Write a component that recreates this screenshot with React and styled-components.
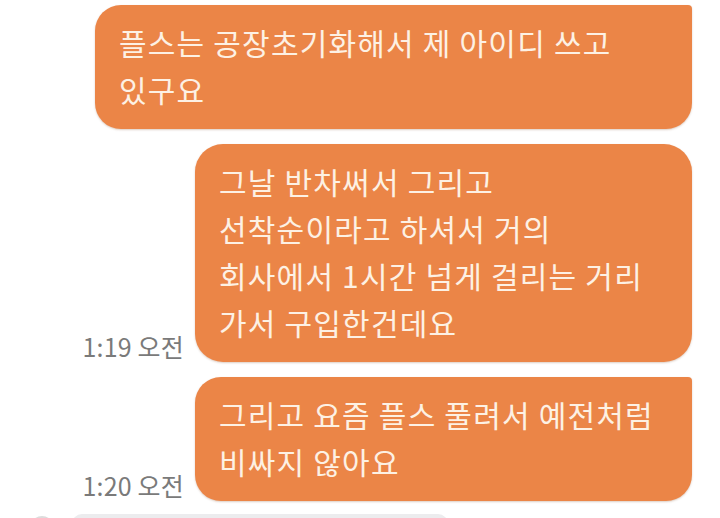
import React from 'react'
import styled, { createGlobalStyle } from 'styled-components'

const messages = [
  {
    id: 1,
    width: 597,
    squareTop: true,
    lines: ['플스는 공장초기화해서 제 아이디 쓰고', '있구요'],
  },
  {
    id: 2,
    width: 497,
    time: '1:19 오전',
    lines: [
      '그날 반차써서 그리고',
      '선착순이라고 하셔서 거의',
      '회사에서 1시간 넘게 걸리는 거리',
      '가서 구입한건데요',
    ],
  },
  {
    id: 3,
    width: 497,
    squareTop: true,
    time: '1:20 오전',
    lines: ['그리고 요즘 플스 풀려서 예전처럼', '비싸지 않아요'],
  },
]

const App = () => {
  return (
    <>
      <GlobalStyle />
      <Chat>
        {messages.map((msg) => (
          <Row key={msg.id}>
            {msg.time && <Time>{msg.time}</Time>}
            <Bubble $width={msg.width} $squareTop={msg.squareTop}>
              {msg.lines.map((line, i) => (
                <Line key={i}>{line}</Line>
              ))}
            </Bubble>
          </Row>
        ))}
        <Incoming>
          <Avatar />
          <GrayBubble />
        </Incoming>
      </Chat>
    </>
  )
}

const GlobalStyle = createGlobalStyle`
  html, body {
    margin: 0;
    padding: 0;
    background: #ffffff;
    overflow: hidden;
  }
  body {
    font-family: "Noto Sans CJK KR", "Noto Sans", sans-serif;
  }
`

const Chat = styled.div`
  width: 720px;
  height: 518px;
  box-sizing: border-box;
  padding: 5px 28px 0 0;
  display: flex;
  flex-direction: column;
  align-items: flex-end;
  gap: 15px;
  overflow: hidden;
`

const Row = styled.div`
  display: flex;
  align-items: flex-end;
  justify-content: flex-end;
  gap: 11px;
`

const Time = styled.span`
  font-family: "Noto Sans CJK KR", sans-serif;
  font-size: 25px;
  color: #7a7a7a;
  line-height: 1;
  padding-bottom: 3px;
  white-space: nowrap;
  letter-spacing: 0.2px;
`

const Bubble = styled.div`
  width: ${(p) => p.$width}px;
  box-sizing: border-box;
  padding: 14px 24px 16px;
  background: #eb8547;
  color: #fdf1e4;
  border-radius: ${(p) => (p.$squareTop ? '26px 4px 26px 26px' : '28px')};
  box-shadow: 0 1px 2px rgba(120, 60, 20, 0.25);
  font-size: 30px;
  line-height: 47px;
  letter-spacing: 1.2px;
  word-spacing: 0px;
`

const Line = styled.div`
  white-space: nowrap;
`

const Incoming = styled.div`
  align-self: stretch;
  display: flex;
  align-items: flex-start;
  gap: 18px;
  padding-left: 30px;
  margin-top: -2px;
`

const Avatar = styled.div`
  width: 24px;
  height: 24px;
  border-radius: 50%;
  background: #dcdcdc;
  margin-top: 2px;
`

const GrayBubble = styled.div`
  width: 376px;
  height: 30px;
  border-radius: 10px;
  background: #ececee;
`

export default App
